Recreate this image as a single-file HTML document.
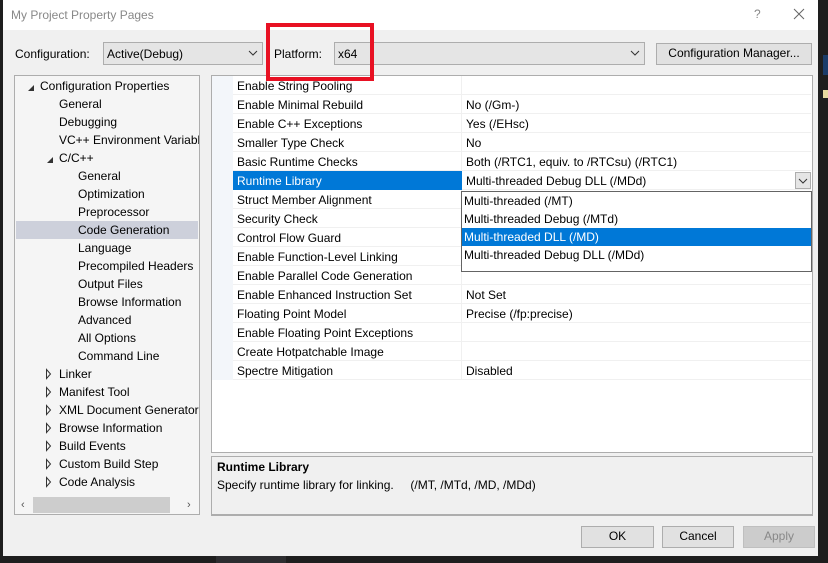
<!DOCTYPE html><html><head><style>
*{box-sizing:border-box;margin:0;padding:0}
body{width:828px;height:563px;position:relative;background:#1e1e1e;font-family:"Liberation Sans",sans-serif;font-size:12px;color:#000;overflow:hidden}
.a{position:absolute}
.dlg{left:3px;top:0;width:820px;height:556px;background:#f0f0f0}
.t{white-space:nowrap;line-height:18px}
.combo{background:#e5e5e5;border:1px solid #adadad}
.btn{background:#e1e1e1;border:1px solid #adadad;text-align:center;line-height:19px}
.row{position:absolute;left:233px;width:578px;height:19px;border-bottom:1px solid #f0f0f0}
.row span{position:absolute;left:4px;top:1px;line-height:18px;white-space:nowrap}
.row b{font-weight:normal;position:absolute;left:233px;top:1px;line-height:18px;white-space:nowrap}
.row i{position:absolute;left:228px;top:0;width:1px;height:19px;background:#f0f0f0}
</style></head><body>
<div class="a dlg"></div>
<div class="a" style="left:3px;top:0;width:820px;height:30px;background:#fff"></div>
<div class="a t" style="left:11px;top:6px;color:#888;font-size:12px">My Project Property Pages</div>
<div class="a t" style="left:754px;top:5px;color:#888">?</div>
<svg class="a" style="left:793px;top:8px" width="12" height="12"><path d="M1 1L11 11M11 1L1 11" stroke="#666" stroke-width="1"/></svg>
<div class="a" style="left:818px;top:0;width:10px;height:563px;background:#1e1e1e"></div>
<div class="a" style="left:823px;top:55px;width:5px;height:20px;background:#1b3c6a"></div>
<div class="a" style="left:823px;top:90px;width:5px;height:8px;background:#e8d9a0"></div>

<div class="a t" style="left:15px;top:45px">Configuration:</div>
<div class="a combo" style="left:103px;top:42px;width:160px;height:23px"></div>
<div class="a t" style="left:107px;top:45px">Active(Debug)</div>
<svg class="a" style="left:248px;top:50px" width="10" height="6"><path d="M1 1L5 5L9 1" stroke="#333" fill="none"/></svg>
<div class="a t" style="left:274px;top:45px">Platform:</div>
<div class="a combo" style="left:334px;top:42px;width:311px;height:23px"></div>
<div class="a t" style="left:338px;top:45px">x64</div>
<svg class="a" style="left:630px;top:50px" width="10" height="6"><path d="M1 1L5 5L9 1" stroke="#333" fill="none"/></svg>
<div class="a btn" style="left:656px;top:43px;width:156px;height:22px">Configuration Manager...</div>

<div class="a" style="left:14px;top:75px;width:186px;height:440px;background:#f5f5f5;border:1px solid #adadad"></div>
<div class="a" style="left:16px;top:221px;width:182px;height:18px;background:#cdd0db"></div>
<svg class="a" style="left:0;top:0" width="60" height="500">
<path d="M28 91L34 85L34 91Z" fill="#333"/>
<path d="M47 163L53 157L53 163Z" fill="#333"/>
<g fill="none" stroke="#333"><path d="M46.5 369.5L50.5 374L46.5 378.5Z"/><path d="M46.5 387.5L50.5 392L46.5 396.5Z"/><path d="M46.5 405.5L50.5 410L46.5 414.5Z"/><path d="M46.5 423.5L50.5 428L46.5 432.5Z"/><path d="M46.5 441.5L50.5 446L46.5 450.5Z"/><path d="M46.5 459.5L50.5 464L46.5 468.5Z"/><path d="M46.5 477.5L50.5 482L46.5 486.5Z"/></g>
</svg>
<div class="a t" style="left:40px;top:77px">Configuration Properties</div>
<div class="a" style="left:59px;top:95px;line-height:18px;white-space:nowrap;width:140px;overflow:hidden">General<br>Debugging<br>VC++ Environment Variables<br>C/C++</div>
<div class="a t" style="left:78px;top:167px">General<br>Optimization<br>Preprocessor<br>Code Generation<br>Language<br>Precompiled Headers<br>Output Files<br>Browse Information<br>Advanced<br>All Options<br>Command Line</div>
<div class="a t" style="left:59px;top:365px">Linker<br>Manifest Tool<br>XML Document Generator<br>Browse Information<br>Build Events<br>Custom Build Step<br>Code Analysis</div>
<div class="a" style="left:33px;top:497px;width:137px;height:16px;background:#cdcdcd"></div>
<div class="a t" style="left:21px;top:496px;color:#555;font-size:11px">‹</div>
<div class="a t" style="left:187px;top:496px;color:#555;font-size:11px">›</div>

<div class="a" style="left:211px;top:75px;width:602px;height:378px;background:#fff;border:1px solid #adadad"></div>
<div class="a" style="left:212px;top:76px;width:21px;height:304px;background:#f3f6fa"></div>
<div class="row" style="top:76px"><span>Enable String Pooling</span><i></i></div>
<div class="row" style="top:95px"><span>Enable Minimal Rebuild</span><i></i><b>No (/Gm-)</b></div>
<div class="row" style="top:114px"><span>Enable C++ Exceptions</span><i></i><b>Yes (/EHsc)</b></div>
<div class="row" style="top:133px"><span>Smaller Type Check</span><i></i><b>No</b></div>
<div class="row" style="top:152px"><span>Basic Runtime Checks</span><i></i><b>Both (/RTC1, equiv. to /RTCsu) (/RTC1)</b></div>
<div class="row" style="top:171px"><span style="left:0;top:0;height:19px;padding-top:1px;padding-left:4px;width:229px;background:#0078d7;color:#fff">Runtime Library</span><b>Multi-threaded Debug DLL (/MDd)</b></div>
<div class="a" style="left:795px;top:172px;width:16px;height:17px;background:#e5e5e5;border:1px solid #adadad"></div>
<svg class="a" style="left:798px;top:178px" width="10" height="6"><path d="M1 1L5 5L9 1" stroke="#333" fill="none"/></svg>
<div class="row" style="top:190px"><span>Struct Member Alignment</span><i></i></div>
<div class="row" style="top:209px"><span>Security Check</span><i></i></div>
<div class="row" style="top:228px"><span>Control Flow Guard</span><i></i></div>
<div class="row" style="top:247px"><span>Enable Function-Level Linking</span><i></i></div>
<div class="row" style="top:266px"><span>Enable Parallel Code Generation</span><i></i></div>
<div class="row" style="top:285px"><span>Enable Enhanced Instruction Set</span><i></i><b>Not Set</b></div>
<div class="row" style="top:304px"><span>Floating Point Model</span><i></i><b>Precise (/fp:precise)</b></div>
<div class="row" style="top:323px"><span>Enable Floating Point Exceptions</span><i></i></div>
<div class="row" style="top:342px"><span>Create Hotpatchable Image</span><i></i></div>
<div class="row" style="top:361px"><span>Spectre Mitigation</span><i></i><b>Disabled</b></div>

<div class="a" style="left:461px;top:191px;width:351px;height:81px;background:#fff;border:1px solid #646464"></div>
<div class="a" style="left:462px;top:228px;width:349px;height:18px;background:#0078d7"></div>
<div class="a t" style="left:464px;top:192px">Multi-threaded (/MT)</div>
<div class="a t" style="left:464px;top:210px">Multi-threaded Debug (/MTd)</div>
<div class="a t" style="left:464px;top:228px;color:#fff">Multi-threaded DLL (/MD)</div>
<div class="a t" style="left:464px;top:246px">Multi-threaded Debug DLL (/MDd)</div>

<div class="a" style="left:211px;top:456px;width:602px;height:60px;border:1px solid #adadad;border-bottom-width:2px"></div>
<div class="a t" style="left:217px;top:458px;font-weight:bold">Runtime Library</div>
<div class="a t" style="left:217px;top:476px">Specify runtime library for linking.&nbsp;&nbsp;&nbsp;&nbsp;&nbsp;(/MT, /MTd, /MD, /MDd)</div>

<div class="a btn" style="left:581px;top:526px;width:73px;height:22px">OK</div>
<div class="a btn" style="left:662px;top:526px;width:72px;height:22px">Cancel</div>
<div class="a btn" style="left:743px;top:526px;width:72px;height:22px;background:#ccc;border-color:#bfbfbf;color:#888">Apply</div>
<div class="a" style="left:216px;top:556px;width:70px;height:7px;background:#2d2d30"></div>
<div class="a" style="left:266px;top:23px;width:108px;height:58px;border:4px solid #e81123"></div>
</body></html>
